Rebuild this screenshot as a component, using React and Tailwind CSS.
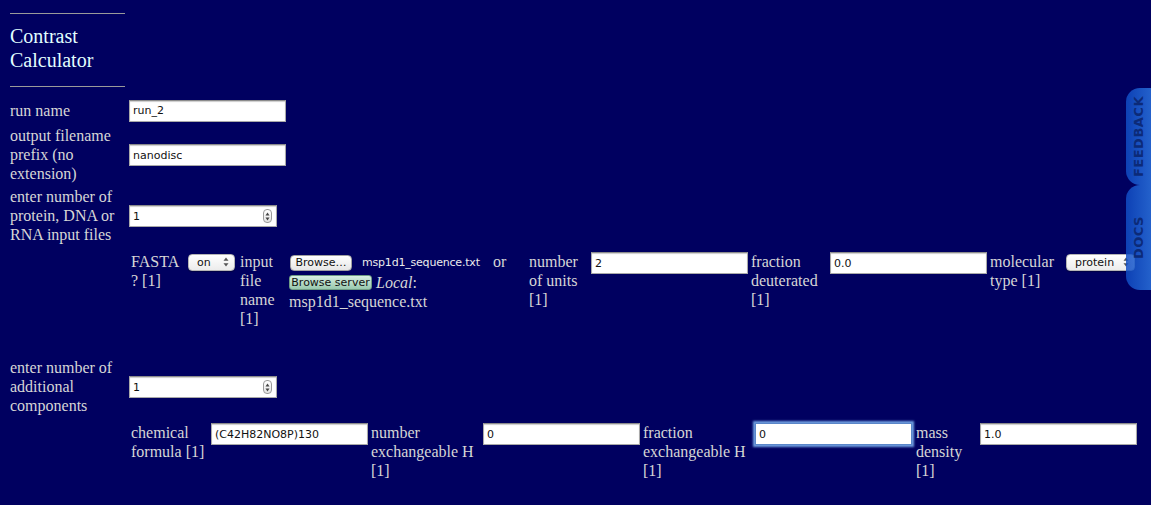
import React from 'react';

// small mac-ish form widgets
function TextInput({ value, className = 'w-[157px]', focused = false }) {
  return (
    <input
      readOnly
      value={value}
      className={
        focused
          ? `${className} h-[22px] bg-white border border-[#5a86c8] shadow-[0_0_2px_2px_#6f9ee0] px-[3px] text-[11px] text-[#111] outline-none [font-family:'DejaVu_Sans',sans-serif]`
          : `${className} h-[22px] bg-white border border-[#a9a9a9] border-t-[#8c8c8c] shadow-[inset_0_1px_1px_rgba(0,0,0,0.2)] px-[3px] text-[11px] text-[#111] outline-none [font-family:'DejaVu_Sans',sans-serif]`
      }
    />
  );
}

function Arrows() {
  return (
    <svg width="6" height="10" viewBox="0 0 6 10" className="shrink-0">
      <path d="M3 0.5 L5.5 3.8 L0.5 3.8 Z" fill="#555" />
      <path d="M3 9.5 L5.5 6.2 L0.5 6.2 Z" fill="#555" />
    </svg>
  );
}

function NumberInput({ value }) {
  return (
    <div className="w-[148px] h-[22px] bg-white border border-[#a9a9a9] border-t-[#8c8c8c] shadow-[inset_0_1px_1px_rgba(0,0,0,0.2)] flex items-center justify-between pl-[3px] pr-[4px]">
      <span className="text-[11px] text-[#111] [font-family:'DejaVu_Sans',sans-serif]">{value}</span>
      <span className="w-[9px] h-[14px] rounded-[4px] border border-[#9a9a9a] bg-gradient-to-b from-white to-[#e4e4e4] flex items-center justify-center">
        <svg width="5" height="9" viewBox="0 0 5 9">
          <path d="M2.5 0.5 L4.5 3.5 L0.5 3.5 Z" fill="#444" />
          <path d="M2.5 8.5 L4.5 5.5 L0.5 5.5 Z" fill="#444" />
        </svg>
      </span>
    </div>
  );
}

function Select({ value, className }) {
  return (
    <div
      className={`${className} h-[17px] rounded-[4px] bg-gradient-to-b from-white to-[#ececec] border border-[#b5b5b5] shadow-[0_1px_1px_rgba(0,0,0,0.3)] flex items-center justify-between pl-[8px] pr-[5px]`}
    >
      <span className="text-[11px] leading-none text-[#111] [font-family:'DejaVu_Sans',sans-serif]">{value}</span>
      <Arrows />
    </div>
  );
}

function Label({ children, className = '' }) {
  return <div className={`${className} whitespace-nowrap`}>{children}</div>;
}

function SideTab({ text, className }) {
  return (
    <div
      className={`${className} absolute right-0 w-[25px] rounded-l-[14px] bg-gradient-to-r from-[rgba(16,76,196,0.85)] to-[rgba(42,114,222,0.85)] flex items-center justify-center`}
    >
      <span className="[writing-mode:vertical-rl] rotate-180 text-[13px] font-bold tracking-[0.5px] text-[#0c2a78] [font-family:'DejaVu_Sans',sans-serif]">
        {text}
      </span>
    </div>
  );
}

export default function App() {
  return (
    <div className="relative w-full min-h-[505px] overflow-hidden bg-[#000060] text-[#d6d6d6] text-[16px] leading-[19px] [font-family:'Liberation_Serif',serif] pl-[10px]">
      {/* heading */}
      <div className="w-[115px] pt-[13px]">
        <div className="h-px bg-[#9a9a9a]" />
        <h2 className="mt-[10px] text-[20px] leading-[24px] text-[#e2ffff]">
          Contrast
          <br />
          Calculator
        </h2>
        <div className="mt-[14px] h-px bg-[#9a9a9a]" />
      </div>

      {/* form */}
      <div className="mt-[11px] grid grid-cols-[115px_auto] gap-x-[4px] gap-y-[2px] items-center">
        <Label className="py-px">run name</Label>
        <div className="py-px">
          <TextInput value="run_2" />
        </div>

        <Label className="py-px">
          output filename
          <br />
          prefix (no
          <br />
          extension)
        </Label>
        <div className="py-px pt-[3px]">
          <TextInput value="nanodisc" />
        </div>

        <Label className="py-px">
          enter number of
          <br />
          protein, DNA or
          <br />
          RNA input files
        </Label>
        <div className="py-px pt-[3px]">
          <NumberInput value="1" />
        </div>

        {/* input file row */}
        <div />
        <div className="flex items-start pt-[5px] pb-[27px]">
          <Label className="w-[59px] pl-[2px]">
            FASTA
            <br />? [1]
          </Label>
          <div className="w-[52px] pt-[2px]">
            <Select value="on" className="w-[47px]" />
          </div>
          <Label className="w-[49px]">
            input
            <br />
            file
            <br />
            name
            <br />
            [1]
          </Label>
          <div className="w-[204px]">
            <div className="flex items-center h-[19px] gap-[10px] pl-px pt-[3px]">
              <button className="w-[62px] h-[16px] rounded-[4px] bg-gradient-to-b from-white to-[#e6e6e6] border border-[#a0a0a0] text-[11px] leading-none text-[#111] [font-family:'DejaVu_Sans',sans-serif]">
                Browse…
              </button>
              <span className="text-[11px] tracking-[-0.2px] text-[#ececec] [font-family:'DejaVu_Sans',sans-serif]">
                msp1d1_sequence.txt
              </span>
            </div>
            <div className="flex items-center h-[19px] gap-[4px] mt-[2px]">
              <button className="w-[83px] h-[15px] rounded-[3px] bg-gradient-to-b from-[#d8f0e3] to-[#98c8ae] border border-[#6f9c84] text-[11px] leading-none text-[#111] [font-family:'DejaVu_Sans',sans-serif]">
                Browse server
              </button>
              <span>
                <i>Local</i>:
              </span>
            </div>
            <div>msp1d1_sequence.txt</div>
          </div>
          <Label className="w-[36px]">or</Label>
          <Label className="w-[62px]">
            number
            <br />
            of units
            <br />
            [1]
          </Label>
          <div className="w-[160px]">
            <TextInput value="2" />
          </div>
          <Label className="w-[79px]">
            fraction
            <br />
            deuterated
            <br />
            [1]
          </Label>
          <div className="w-[160px]">
            <TextInput value="0.0" />
          </div>
          <Label className="w-[76px]">
            molecular
            <br />
            type [1]
          </Label>
          <div className="pt-[2px]">
            <Select value="protein" className="w-[69px]" />
          </div>
        </div>

        <Label className="py-px">
          enter number of
          <br />
          additional
          <br />
          components
        </Label>
        <div className="py-px pt-[3px]">
          <NumberInput value="1" />
        </div>

        {/* additional component row */}
        <div />
        <div className="flex items-start pt-[5px]">
          <Label className="w-[82px] pl-[2px]">
            chemical
            <br />
            formula [1]
          </Label>
          <div className="w-[160px]">
            <TextInput value="(C42H82NO8P)130" />
          </div>
          <Label className="w-[112px]">
            number
            <br />
            exchangeable H
            <br />
            [1]
          </Label>
          <div className="w-[160px]">
            <TextInput value="0" />
          </div>
          <Label className="w-[112px]">
            fraction
            <br />
            exchangeable H
            <br />
            [1]
          </Label>
          <div className="w-[161px]">
            <TextInput value="0" focused />
          </div>
          <Label className="w-[64px]">
            mass
            <br />
            density
            <br />
            [1]
          </Label>
          <div>
            <TextInput value="1.0" />
          </div>
        </div>
      </div>

      {/* side tabs */}
      <SideTab text="FEEDBACK" className="top-[88px] h-[97px] z-10" />
      <SideTab text="DOCS" className="top-[185px] h-[105px] z-20" />
    </div>
  );
}
